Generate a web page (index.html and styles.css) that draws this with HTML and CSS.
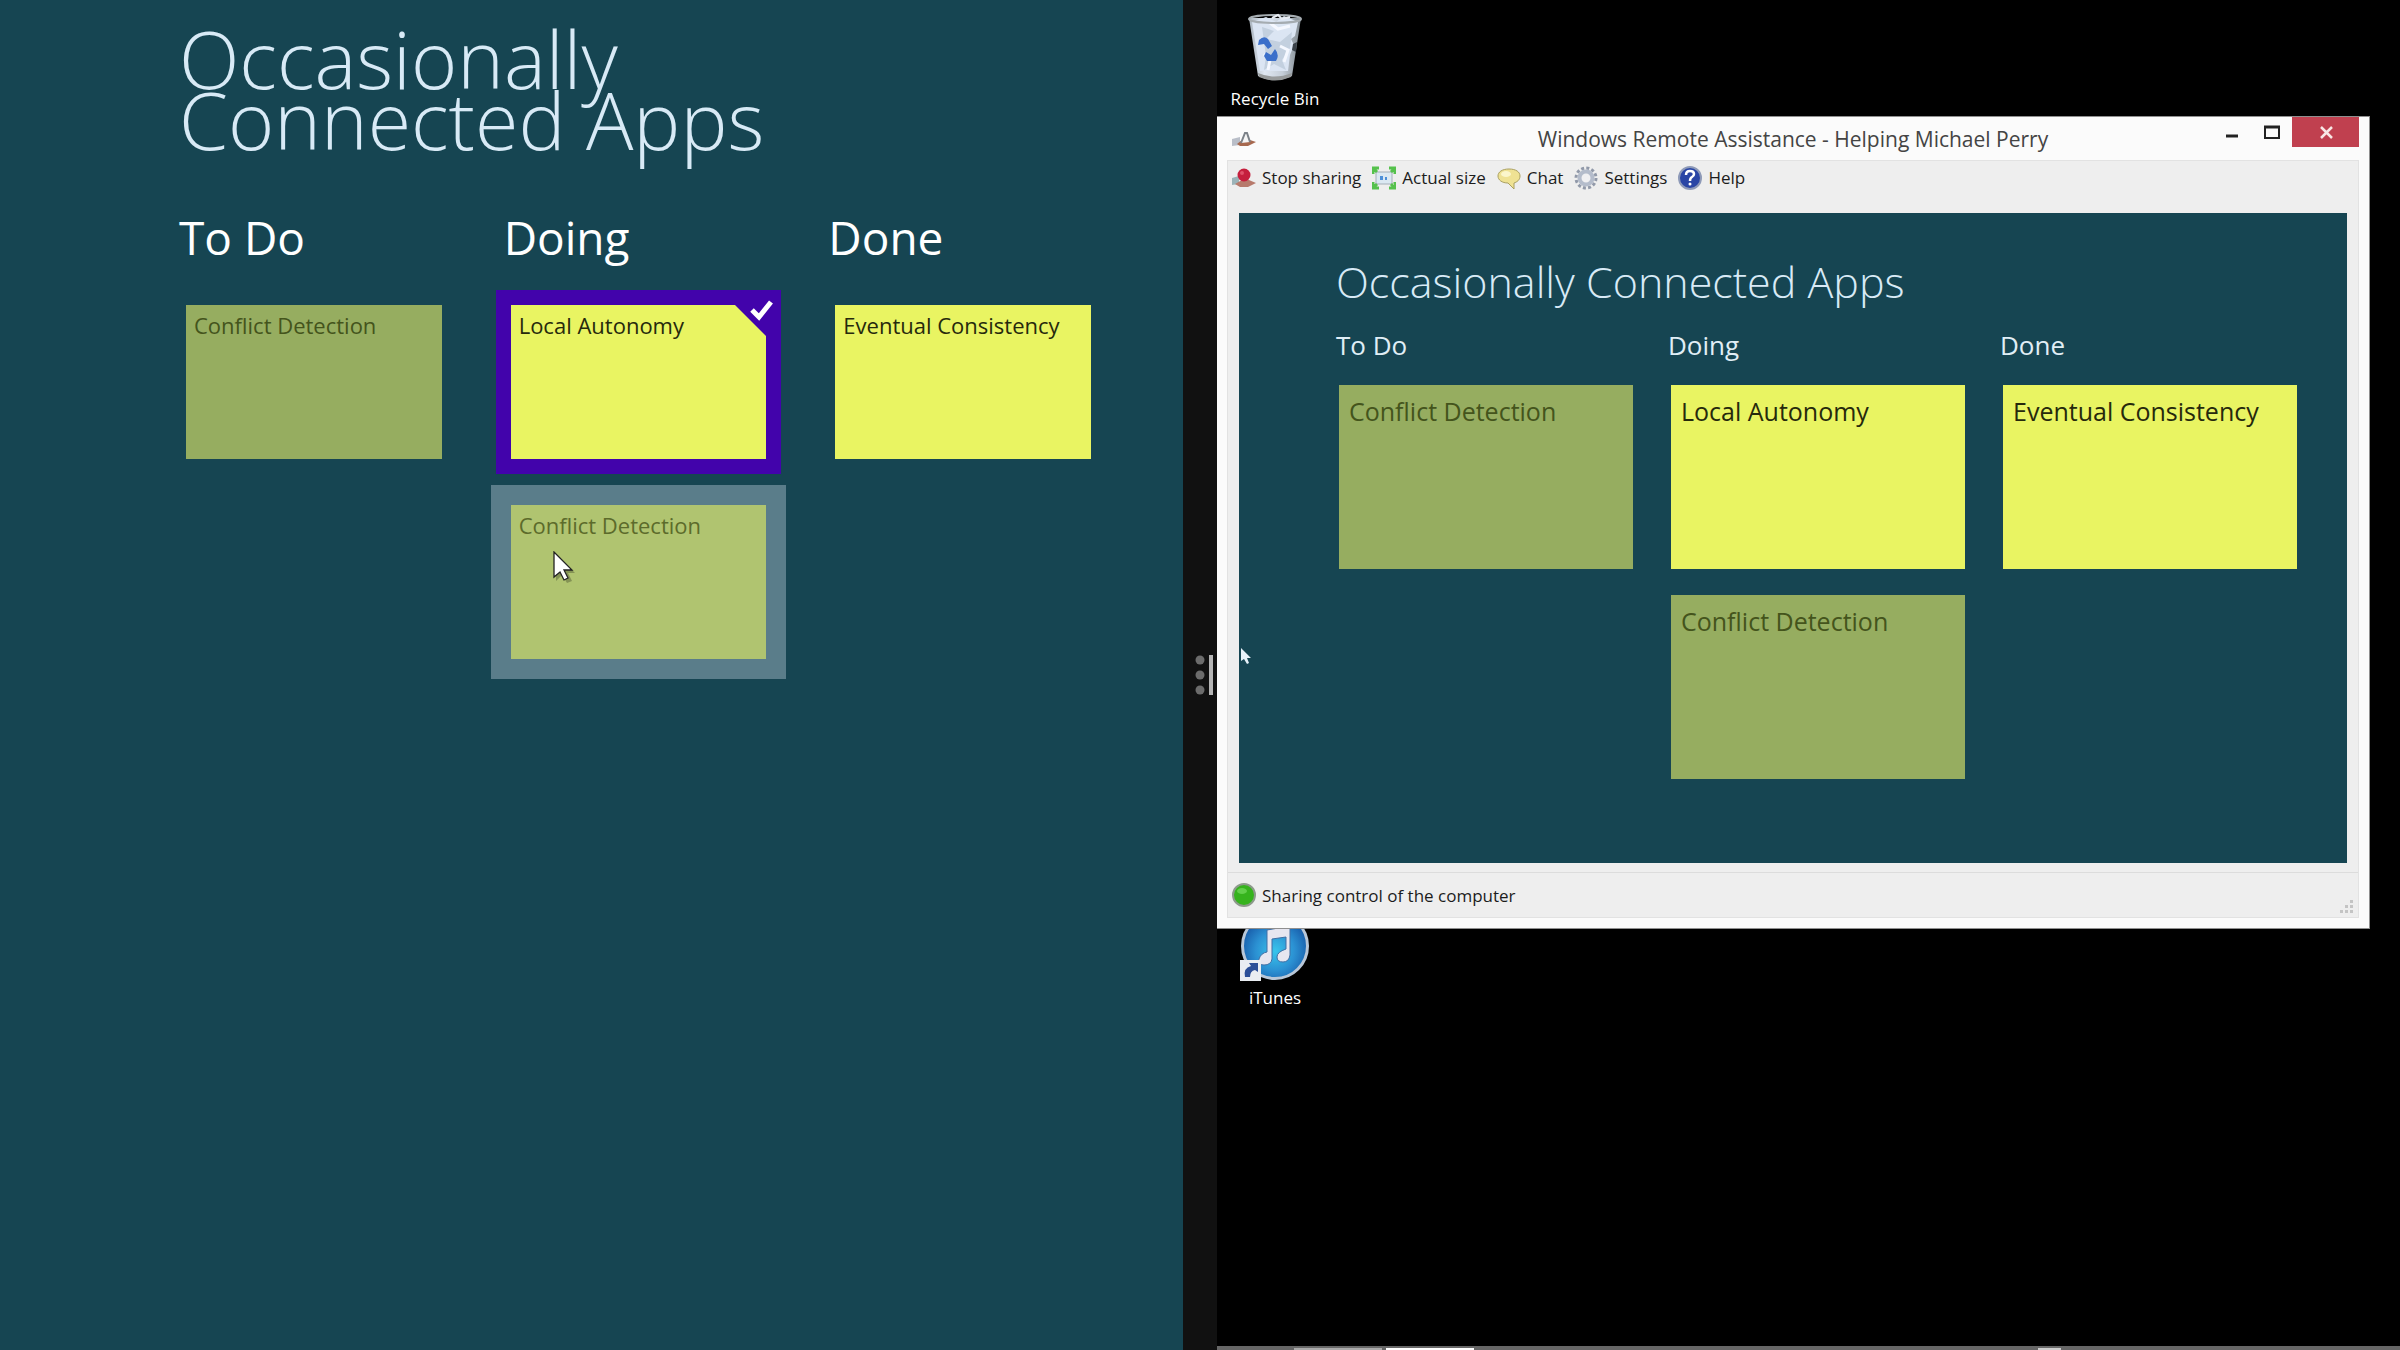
FILE: index.html
```html
<!DOCTYPE html>
<html lang="en">
<head>
<meta charset="utf-8">
<title>Occasionally Connected Apps</title>
<link rel="stylesheet" href="styles.css">
</head>
<body>
<div class="screen">
  <main class="board board-local">
    <h1 class="board-title">Occasionally Connected Apps</h1>
    <div class="columns">
      <section class="column">
        <h2 class="column-title">To Do</h2>
        <ul class="cards">
          <li class="card card-faded">Conflict Detection</li>
        </ul>
      </section>
      <section class="column">
        <h2 class="column-title">Doing</h2>
        <ul class="cards">
          <li class="card card-selected">Local Autonomy
            <svg class="card-check" viewBox="0 0 46 46" aria-hidden="true">
              <path d="M0 15H31V46Z" fill="#4203ab"/>
              <path d="M17 20l7 7L36 12" fill="none" stroke="#fff" stroke-width="5"/>
            </svg>
          </li>
          <li class="card card-hover">Conflict Detection
            <svg class="pointer" viewBox="0 0 22 32" aria-hidden="true">
              <path d="M3 3v27l6-6 5 8 5-2-4-8h7z" fill="#000" opacity=".25"/>
              <path d="M1 1v25l6-5 4 8 4-2-4-8h8z" fill="#fff" stroke="#222" stroke-width="1.3"/>
            </svg>
          </li>
        </ul>
      </section>
      <section class="column">
        <h2 class="column-title">Done</h2>
        <ul class="cards">
          <li class="card">Eventual Consistency</li>
        </ul>
      </section>
    </div>
  </main>

  <div class="splitter" role="separator" aria-orientation="vertical">
    <svg class="splitter-grip" viewBox="0 0 24 42" aria-hidden="true">
      <g fill="#6c6c6c"><circle cx="7" cy="6" r="4.500"/><circle cx="7" cy="21" r="4.500"/><circle cx="7" cy="36" r="4.500"/></g>
      <path d="M18 1v40" stroke="#b5b5b5" stroke-width="4"/>
    </svg>
  </div>

  <div class="desktop">
    <button class="desktop-icon icon-bin" type="button">
      <svg class="desktop-art" viewBox="0 0 70 70" aria-hidden="true">
        <defs>
          <linearGradient id="bin" x1="0" x2="1"><stop offset="0" stop-color="#aab4be"/><stop offset=".3" stop-color="#dfe7f2"/><stop offset=".65" stop-color="#c5ced8"/><stop offset="1" stop-color="#7c858c"/></linearGradient>
        </defs>
        <path d="M9 6l9 58q16 8 34 0L61 6z" fill="url(#bin)"/>
        <path d="M12 10l14-5 10 5 8-6 14 6-3 14-4 3 3 6-4 10-2 16H20z" fill="#dbe5f3"/>
        <path d="M22 15l12 4-8 8 14 3 12-10-2 16-8 12 4 10-12-6-10 6 2-14z" fill="#c3d0df"/>
        <path d="M24 42l6 6-2 10M40 34l8 4-4 12M30 11l8 6 12-3" fill="none" stroke="#f5f8ff" stroke-width="3"/>
        <path d="M53 32l4-2-1 10-4-2z" fill="#3a4148"/>
        <ellipse cx="35" cy="7" rx="26" ry="4" fill="none" stroke="#a5acb1" stroke-width="2"/>
        <path d="M32 6l6-3 4 4 8-2" fill="none" stroke="#e8ecf2" stroke-width="2"/>
        <path d="M19 28q5-5 9-1l4 7-4 3-4-5-6 1zM26 40l5 3 4-6q5 6 1 12h-9l-3-5z" fill="#3b6fca"/>
        <path d="M18 61q16 7 34 0l-1 4q-16 7-32 0z" fill="#989b9c"/>
      </svg>
      <span>Recycle Bin</span>
    </button>
    <button class="desktop-icon icon-itunes" type="button">
      <svg class="desktop-art" viewBox="0 0 70 70" aria-hidden="true">
        <defs>
          <radialGradient id="disc" cy=".58" r=".55"><stop offset="0" stop-color="#38c5ec"/><stop offset=".55" stop-color="#2b90d2"/><stop offset="1" stop-color="#175aa8"/></radialGradient>
        </defs>
        <circle cx="35" cy="35" r="32.500" fill="url(#disc)" stroke="#b8c7d8" stroke-width="3"/>
        <path d="M27 19l23-4v29q-1 7-7 7t-6-5 9-8V26l-14 2v20q-1 6-8 6t-5-6 8-7z" fill="#e6e6f0" stroke="#406fa5" stroke-width="1"/>
        <rect x="0" y="49" width="21" height="21" fill="#e9edf2"/>
        <path d="M5 66q-2-9 6-11l-2-3h9v9l-3-2q-5 1-5 7z" fill="#2b4f98"/>
      </svg>
      <span>iTunes</span>
    </button>

    <section class="window" aria-label="Windows Remote Assistance">
      <header class="titlebar">
        <svg class="tool-icon app-icon" viewBox="0 0 24 24" aria-hidden="true">
          <path d="M0 12l8-2v8l-8 1z" fill="#b9bec8"/>
          <path d="M5 17l5-4h8l6 2-8 4H8z" fill="#a7694f"/>
          <path d="M9 16l4-10 2 0 3 9" fill="#f5f5f5" stroke="#7c8288" stroke-width="2"/>
        </svg>
        <p class="window-title">Windows Remote Assistance - Helping Michael Perry</p>
        <div class="window-buttons">
          <button class="window-button" type="button" aria-label="Minimize"><svg viewBox="0 0 16 16"><path d="M2 12h12" stroke="#222" stroke-width="3"/></svg></button>
          <button class="window-button" type="button" aria-label="Maximize"><svg viewBox="0 0 16 16"><path d="M0 3h16M1 2v12h14V2" fill="none" stroke="#222" stroke-width="2"/><path d="M0 3h16" stroke="#222" stroke-width="3"/></svg></button>
          <button class="window-button window-close" type="button" aria-label="Close"><svg viewBox="0 0 16 16"><path d="M3 3l11 11M14 3L3 14" stroke="#f8e6e4" stroke-width="2.500"/></svg></button>
        </div>
      </header>
      <div class="window-body">
        <div class="toolbar" role="toolbar">
          <button class="tool" type="button">
            <svg class="tool-icon" viewBox="0 0 24 24" aria-hidden="true"><path d="M0 12l7-2v8l-7 1z" fill="#9bb3b8"/><path d="M3 18l7-4h7l7 3-8 4H8z" fill="#b77a6c"/><circle cx="12" cy="9" r="6.500" fill="#c51f3d"/><circle cx="10" cy="7" r="2" fill="#df5068"/></svg>
            Stop sharing</button>
          <button class="tool" type="button">
            <svg class="tool-icon" viewBox="0 0 24 24" aria-hidden="true"><rect x="4" y="6" width="16" height="12" fill="#dbe8f2" stroke="#a3aeb8"/><path d="M8 10h3v4H8zM13 11h2v3h-2z" fill="#4d8fd8"/><path d="M1 8V2h6M17 2h6v6M23 16v6h-6M7 22H1v-6M2 3l3 3M22 3l-3 3M22 21l-3-3M2 21l3-3" fill="none" stroke="#55c14c" stroke-width="3"/></svg>
            Actual size</button>
          <button class="tool" type="button">
            <svg class="tool-icon" viewBox="0 0 24 24" aria-hidden="true"><path d="M12 3c7 0 11 3 11 7s-3 6-6 7v6l-6-6C5 17 1 14 1 10s4-7 11-7z" fill="#efe293" stroke="#aaa060"/><ellipse cx="9" cy="8" rx="5" ry="3" fill="#fbf6cb"/></svg>
            Chat</button>
          <button class="tool" type="button">
            <svg class="tool-icon" viewBox="0 0 24 24" aria-hidden="true"><circle cx="12" cy="12" r="10" fill="none" stroke="#9199a9" stroke-width="3" stroke-dasharray="3 2.236"/><circle cx="12" cy="12" r="6.500" fill="#f0f0f2" stroke="#b4bccb" stroke-width="4"/></svg>
            Settings</button>
          <button class="tool" type="button">
            <svg class="tool-icon" viewBox="0 0 24 24" aria-hidden="true"><circle cx="12" cy="12" r="11" fill="#2945a5" stroke="#8e9ab8" stroke-width="2"/><path d="M8 9q0-4 4-4t4 3q0 2-2 3t-2 4" fill="none" stroke="#fff" stroke-width="2.500"/><circle cx="12" cy="18" r="1.500" fill="#fff"/></svg>
            Help</button>
        </div>
        <div class="board board-remote">
          <svg class="pointer-remote" viewBox="0 0 12 16" aria-hidden="true"><path d="M1 0v13l3-2 3 5 2-1-2-5h4z" fill="#e8f2fa"/></svg>
          <h1 class="board-title">Occasionally Connected Apps</h1>
          <div class="columns">
            <section class="column">
              <h2 class="column-title">To Do</h2>
              <ul class="cards">
                <li class="card card-faded">Conflict Detection</li>
              </ul>
            </section>
            <section class="column">
              <h2 class="column-title">Doing</h2>
              <ul class="cards">
                <li class="card">Local Autonomy</li>
                <li class="card card-faded">Conflict Detection</li>
              </ul>
            </section>
            <section class="column">
              <h2 class="column-title">Done</h2>
              <ul class="cards">
                <li class="card">Eventual Consistency</li>
              </ul>
            </section>
          </div>
        </div>
        <footer class="statusbar">
          <svg class="tool-icon" viewBox="0 0 24 24" aria-hidden="true"><circle cx="12" cy="12" r="11" fill="#36b31d" stroke="#8d9a8b" stroke-width="2"/><ellipse cx="10" cy="8" rx="5" ry="3" fill="#62cf4b"/></svg>
          <span>Sharing control of the computer</span>
          <svg class="resize-grip" viewBox="0 0 14 14" aria-hidden="true"><path d="M10 1h3v3h-3zM5 6h3v3H5zM10 6h3v3h-3zM0 11h3v3H0zM5 11h3v3H5zM10 11h3v3h-3z" fill="#c4c4c4"/></svg>
        </footer>
      </div>
    </section>

    <div class="taskbar"><i class="task task-open"></i><i class="task task-active"></i><i class="task task-tray"></i></div>
  </div>
</div>
</body>
</html>
```
FILE: styles.css
```css
* { box-sizing: border-box; }

body {
  margin: 0;
  background: #000;
  font-family: "Open Sans", "Noto Sans", sans-serif;
}

h1, h2, p, ul { margin: 0; padding: 0; font-weight: 400; }
ul { list-style: none; }
button { border: 0; background: none; padding: 0; font: inherit; color: inherit; }

.screen {
  display: grid;
  grid-template-columns: 1fr 34px 1fr;
  min-height: 100vh;
}

/* Kanban board */
.board { background: #164552; color: #fff; }
.board-title { font-weight: 300; color: #d8eaf6; }
.columns { display: grid; grid-template-columns: repeat(3, 1fr); }
.cards { display: grid; }
.card {
  position: relative;
  background: #e9f462;
  color: #26290c;
}
.card-faded { background: #96ad60; color: #44541c; }
.card-hover { background: #b0c470; color: #5c6b2b; box-shadow: 0 0 0 20px #5a7d8a; }
.card-selected { box-shadow: 0 0 0 15px #4203ab; }

.board-local { padding: 28px 92px 0 179px; }
.board-local .board-title { max-width: 640px; font-size: 79px; line-height: 61px; }
.board-local .columns { gap: 62px; margin-top: 55px; }
.board-local .column-title { font-size: 46px; line-height: 64px; white-space: nowrap; }
.board-local .cards { gap: 46px; margin-top: 36px; padding-left: 7px; }
.board-local .card { height: 154px; padding: 4px 8px; font-size: 22px; line-height: 32px; }

.card-check { position: absolute; top: -15px; right: -15px; width: 46px; height: 46px; }
.pointer { position: absolute; top: 46px; left: 42px; width: 22px; height: 32px; }

/* Divider between the two snapped apps */
.splitter {
  display: flex;
  align-items: center;
  justify-content: flex-end;
  background: #111;
}
.splitter-grip { width: 24px; height: 42px; }

/* Desktop */
.desktop { position: relative; background: #000; color: #fff; }
.desktop-icon {
  position: absolute;
  left: 0;
  display: flex;
  flex-direction: column;
  align-items: center;
  gap: 5px;
  width: 116px;
  font-size: 17px;
  line-height: 24px;
}
.desktop-art { width: 70px; height: 70px; }
.icon-bin { top: 12px; }
.icon-itunes { top: 911px; }

.window {
  position: absolute;
  top: 116px;
  left: 0;
  right: 30px;
  padding: 0 10px 10px;
  border: 1px solid #8f8f8f;
  border-width: 1px 1px 1px 0;
  background: #fbfbfb;
}
.titlebar {
  display: grid;
  grid-template-columns: 1fr auto 1fr;
  align-items: center;
  height: 43px;
}
.app-icon { margin-left: 5px; }
.window-title { color: #444; font-size: 21px; line-height: 28px; }
.window-buttons { display: flex; justify-content: flex-end; align-self: start; }
.window-button {
  display: flex;
  align-items: center;
  justify-content: center;
  width: 40px;
  height: 30px;
}
.window-button svg { width: 16px; height: 16px; }
.window-close { width: 67px; background: #c0404f; }

.window-body { border: 1px solid #e2e2e2; background: #eee; color: #1c1c1c; }
.toolbar {
  display: flex;
  align-items: flex-start;
  gap: 11px;
  height: 52px;
  padding: 4px;
}
.tool { display: flex; align-items: center; gap: 6px; font-size: 17px; line-height: 26px; }
.tool-icon { flex: none; width: 24px; height: 24px; }

.board-remote {
  position: relative;
  aspect-ratio: 1109 / 651;
  margin: 0 11px 9px;
  padding: 39px 50px 0 97px;
}
.board-remote .board-title { font-size: 43px; line-height: 60px; white-space: nowrap; }
.board-remote .columns { gap: 35px; margin-top: 15px; }
.board-remote .column-title { color: #e0eef6; font-size: 26px; line-height: 36px; }
.board-remote .cards { gap: 26px; margin-top: 22px; padding-left: 3px; }
.board-remote .card { height: 184px; padding: 8px 10px; font-size: 25px; line-height: 36px; }
.pointer-remote { position: absolute; top: 435px; left: 1px; width: 12px; height: 16px; }

.statusbar {
  display: flex;
  align-items: center;
  gap: 6px;
  height: 45px;
  padding: 0 4px;
  border-top: 1px solid #dcdcdc;
  font-size: 17px;
}
.resize-grip { align-self: flex-end; width: 14px; height: 14px; margin: 0 0 4px auto; }

.taskbar {
  position: absolute;
  right: 0;
  bottom: 0;
  left: 0;
  display: flex;
  gap: 4px;
  height: 4px;
  padding: 2px 339px 0 77px;
  background: #666;
}
.task { width: 88px; background: #aaa; }
.task-active { background: #fff; }
.task-tray { width: 23px; margin-left: auto; background: #ccc; }
```
